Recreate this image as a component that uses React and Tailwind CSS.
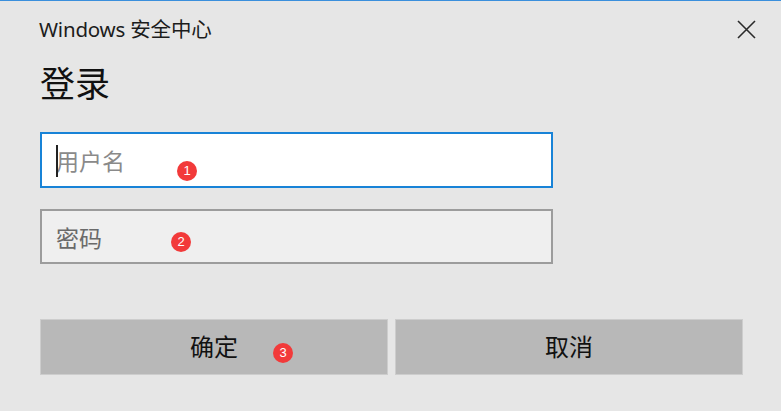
const FONT = "font-['Noto_Sans','Noto_Sans_CJK_SC',sans-serif]";

function Badge({ n, className }) {
  return (
    <span
      className={`absolute w-[20px] h-[20px] rounded-full bg-[#f23a3a] text-white text-[13px] leading-[20px] text-center font-['Liberation_Sans',sans-serif] ${className}`}
    >
      {n}
    </span>
  );
}

export default function App() {
  return (
    <div className={`relative w-[781px] h-[411px] bg-[#e6e6e6] border-t border-[#3a8fdc] ${FONT}`}>
      {/* Header */}
      <div className="flex items-center justify-between h-[57px] pl-[39px] pr-[25px]">
        <span className="text-[20.5px] text-[#1c1c1c] tracking-[-0.2px]">Windows 安全中心</span>
        <svg width="19" height="19" viewBox="0 0 19 19" fill="none" stroke="#2b2b2b" strokeWidth="1.6">
          <path d="M1 1 L18 18 M18 1 L1 18" />
        </svg>
      </div>

      <div className="pl-[40px]">
        <h1 className="mt-[4px] h-[44px] leading-[44px] text-[35px] text-[#111]">登录</h1>

        {/* Username */}
        <div className="relative mt-[26px] w-[513px] h-[56px] border-2 border-[#1883d7] bg-white flex items-center pl-[14px]">
          <span className="absolute left-[14px] top-[11px] w-[2px] h-[32px] bg-[#222]" />
          <span className="text-[23px] text-[#8a8a8a] pt-[3px]">用户名</span>
        </div>

        {/* Password */}
        <div className="mt-[21px] w-[513px] h-[55px] border-2 border-[#9c9c9c] bg-[#efefef] flex items-center pl-[14px]">
          <span className="text-[23px] text-[#6a6a6a] pt-[3px]">密码</span>
        </div>

        {/* Buttons */}
        <div className="mt-[55px] flex gap-[7px]">
          <button className="w-[348px] h-[56px] bg-[#b8b8b8] border border-[#cdcdcd] text-[24px] text-[#111]">
            确定
          </button>
          <button className="w-[348px] h-[56px] bg-[#b8b8b8] border border-[#cdcdcd] text-[24px] text-[#111]">
            取消
          </button>
        </div>
      </div>

      <Badge n="1" className="left-[177px] top-[160px]" />
      <Badge n="2" className="left-[171px] top-[231px]" />
      <Badge n="3" className="left-[273px] top-[342px]" />
    </div>
  );
}
